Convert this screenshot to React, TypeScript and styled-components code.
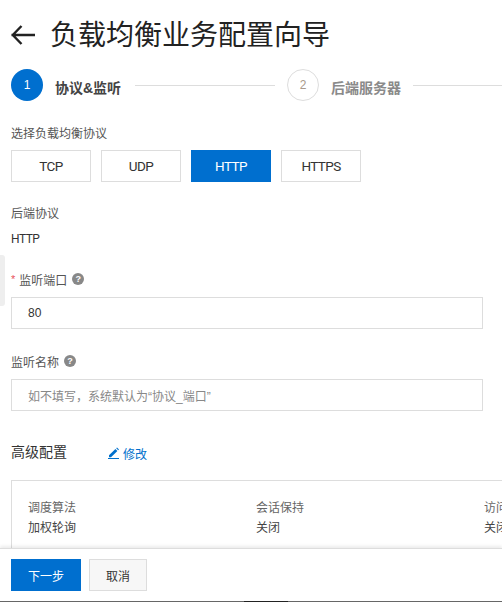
import React from "react";
import styled, { createGlobalStyle } from "styled-components";

const Global = createGlobalStyle`
  html, body { margin: 0; padding: 0; background: #fff; }
  body { font-family: "Liberation Sans", "Noto Sans CJK SC", sans-serif; overflow: hidden; }
  * { box-sizing: border-box; }
`;
const Page = styled.div`
  width: 502px; height: 602px; position: relative; overflow: hidden; background: #fff;
  display: flex; flex-direction: column;
`;
const Scroll = styled.main`
  flex: 0 0 548px; height: 548px; overflow: hidden; padding: 0 0 0 11px;
  font-size: 12px; color: #333;
`;
const Header = styled.header`
  height: 66px; padding-top: 6px; display: flex; align-items: center; gap: 15px;
`;
const BackIcon = styled.svg`
  flex: none; margin-top: -2px;
`;
const Title = styled.h1`
  margin: 0; font-size: 28px; line-height: 38px; font-weight: 400; color: #222;
`;
const Steps = styled.div`
  display: flex; align-items: center; height: 36px; width: 600px; margin-top: 1px;
`;
const Circle = styled.div<{ $active?: boolean }>`
  width: 32px; height: 32px; border-radius: 50%; flex: none;
  display: flex; align-items: center; justify-content: center; font-size: 12px;
  background: ${(p) => (p.$active ? "#006fcf" : "#fff")};
  color: ${(p) => (p.$active ? "#fff" : "#a89a8c")};
  border: ${(p) => (p.$active ? "none" : "1px solid #ddd")};
`;
const StepLabel = styled.span<{ $active?: boolean }>`
  margin-left: 12px; padding-top: 3px; font-size: 14px; font-weight: 700; white-space: nowrap;
  min-width: 68px;
  color: ${(p) => (p.$active ? "#444" : "#8a8a8a")};
`;
const StepLine = styled.div<{ $w: number }>`
  width: ${(p) => p.$w}px; height: 1px; background: #ddd; margin: 0 12px; flex: none;
`;
const SectionLabel = styled.div<{ $top: number }>`
  margin-top: ${(p) => p.$top}px; font-size: 12px; line-height: 18px; color: #555;
`;
const Protocols = styled.div`
  display: flex; gap: 10px; margin-top: 7px;
`;
const Proto = styled.button<{ $on?: boolean }>`
  width: 80px; height: 32px; padding: 0; font-family: Roboto, sans-serif; font-size: 13.5px;
  letter-spacing: -0.6px; border-radius: 0;
  background: ${(p) => (p.$on ? "#006fcf" : "#fff")};
  color: ${(p) => (p.$on ? "#fff" : "#333")};
  border: ${(p) => (p.$on ? "none" : "1px solid #ddd")};
`;
const ValueLine = styled.div`
  margin-top: 7px; font-family: Roboto, sans-serif; font-size: 12px; letter-spacing: -0.5px;
  line-height: 18px; color: #333;
`;
const FieldLabel = styled.label<{ $top: number }>`
  display: flex; align-items: center; margin-top: ${(p) => p.$top}px; height: 18px;
  font-size: 12px; color: #555;
`;
const Star = styled.span`
  color: #e8505b; margin-right: 4px; font-size: 11px;
`;
const Help = styled.span`
  width: 12px; height: 12px; border-radius: 50%; background: #888; color: #fff;
  margin-left: 5px; font-size: 9px; font-weight: 700; display: flex; align-items: center; justify-content: center;
`;
const Field = styled.div<{ $muted?: boolean }>`
  width: 472px; height: 32px; border: 1px solid #ddd; margin-top: 9px; padding: 0 16px;
  display: flex; align-items: center; font-size: 12px;
  color: ${(p) => (p.$muted ? "#888" : "#333")};
`;
const AdvancedHead = styled.div`
  display: flex; align-items: center; margin-top: 28px; height: 24px;
`;
const AdvancedTitle = styled.h2`
  margin: 0; font-size: 14px; font-weight: 400; color: #333; width: 97px;
`;
const EditLink = styled.a`
  display: flex; align-items: center; gap: 3px; color: #0070cc; font-size: 12px; margin-top: 4px;
`;
const Advanced = styled.div`
  width: 600px; height: 100px; border: 1px solid #ddd; margin-top: 17px; padding: 17px 16px;
  display: flex;
`;
const Col = styled.div`
  width: 228px; flex: none; font-size: 12px; line-height: 20px; color: #444;
`;
const ColHead = styled.div`
  color: #666;
`;
const Footer = styled.footer`
  height: 54px; flex: none; background: #fff; border-top: 1px solid #ddd;
  box-shadow: 0 -2px 3px rgba(0,0,0,.08); display: flex; gap: 8px; padding: 10px 0 0 11px; position: relative;
`;
const Primary = styled.button`
  width: 70px; height: 32px; border: none; border-radius: 0; background: #006fcf; color: #fff;
  font: inherit; font-size: 12px; padding: 0;
`;
const Secondary = styled.button`
  width: 58px; height: 32px; border: 1px solid #ddd; border-radius: 0; background: #f7f7f7; color: #333;
  font: inherit; font-size: 12px; padding: 0;
`;
const SideTab = styled.div`
  position: absolute; left: 0; top: 255px; width: 5px; height: 51px; background: #eee;
  border-radius: 0 3px 3px 0;
`;
const BottomEdge = styled.div`
  position: absolute; left: 0; right: 0; bottom: 0; height: 1px; background: #666;
`;
const BottomDark = styled.div`
  position: absolute; left: 244px; width: 44px; bottom: 0; height: 1px; background: #222;
`;

const Back = () => (
  <BackIcon width="24" height="20" viewBox="0 0 24 20" fill="none" stroke="#222" strokeWidth="2.4">
    <path d="M0.5 10H24M10.5 1L1.8 10l8.7 9" />
  </BackIcon>
);
const Pen = () => (
  <svg width="12" height="12" viewBox="0 0 12 12" fill="#0070cc">
    <path d="M1 8.2L7.4 2l2 2L3 10.2H1zM8.2 1.2L9 .4l2 2-.8.8zM0 11h11v1H0z" />
  </svg>
);

export default function App() {
  return (
    <Page>
      <Global />
      <Scroll>
        <Header><Back /><Title>负载均衡业务配置向导</Title></Header>
        <Steps>
          <Circle $active>1</Circle>
          <StepLabel $active>协议&amp;监听</StepLabel>
          <StepLine $w={140} />
          <Circle>2</Circle>
          <StepLabel>后端服务器</StepLabel>
          <StepLine $w={140} />
        </Steps>
        <SectionLabel $top={22}>选择负载均衡协议</SectionLabel>
        <Protocols>
          <Proto>TCP</Proto>
          <Proto>UDP</Proto>
          <Proto $on>HTTP</Proto>
          <Proto>HTTPS</Proto>
        </Protocols>
        <SectionLabel $top={23}>后端协议</SectionLabel>
        <ValueLine>HTTP</ValueLine>
        <FieldLabel $top={22}><Star>*</Star>监听端口<Help>?</Help></FieldLabel>
        <Field>80</Field>
        <FieldLabel $top={23}>监听名称<Help>?</Help></FieldLabel>
        <Field $muted>如不填写，系统默认为“协议_端口”</Field>
        <AdvancedHead>
          <AdvancedTitle>高级配置</AdvancedTitle>
          <EditLink><Pen />修改</EditLink>
        </AdvancedHead>
        <Advanced>
          <Col><ColHead>调度算法</ColHead>加权轮询</Col>
          <Col><ColHead>会话保持</ColHead>关闭</Col>
          <Col><ColHead>访问控制</ColHead>关闭</Col>
        </Advanced>
      </Scroll>
      <Footer>
        <Primary>下一步</Primary>
        <Secondary>取消</Secondary>
      </Footer>
      <SideTab />
      <BottomEdge /><BottomDark />
    </Page>
  );
}
